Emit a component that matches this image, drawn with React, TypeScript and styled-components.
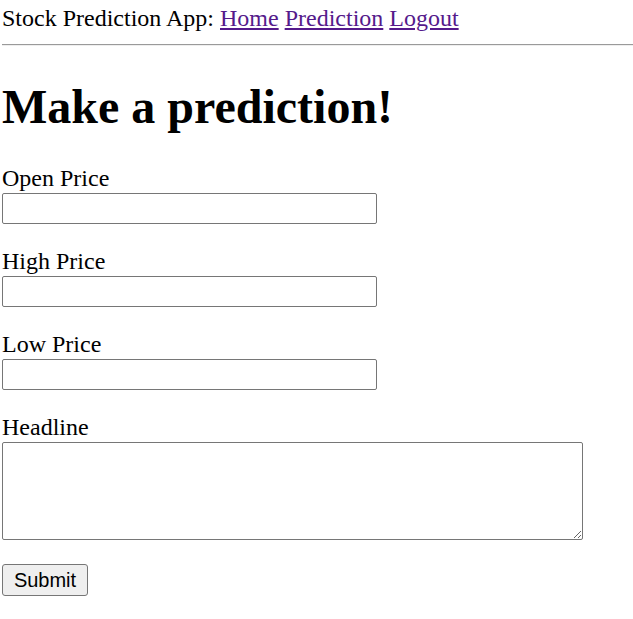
import React from "react";
import styled, { createGlobalStyle } from "styled-components";

const GlobalStyle = createGlobalStyle`
  html, body {
    margin: 0;
    padding: 0;
    background: #ffffff;
  }
  body {
    padding: 6px 0 0 2px;
    font-family: "Liberation Serif", "Times New Roman", serif;
    font-size: 24px;
    color: #000000;
  }
`;

const Nav = styled.nav`
  line-height: 24px;
  white-space: nowrap;
`;

const NavLink = styled.a`
  color: #551a8b;
  text-decoration: underline;
  cursor: pointer;
`;

const Rule = styled.hr`
  margin: 14px 0 0 0;
  border: none;
  border-top: 1px solid #9a9a9a;
  border-bottom: 1px solid #eeeeee;
  height: 0;
`;

const Title = styled.h1`
  margin: 36px 0 0 0;
  font-size: 48px;
  font-weight: bold;
  line-height: 49px;
`;

const Form = styled.form`
  display: flex;
  flex-direction: column;
  align-items: flex-start;
  margin-top: 34px;
  gap: 24px;
`;

const Field = styled.div`
  display: flex;
  flex-direction: column;
  align-items: flex-start;
`;

const Label = styled.label`
  line-height: 26px;
  margin-bottom: 2px;
`;

const TextInput = styled.input`
  box-sizing: border-box;
  width: 375px;
  height: 31px;
  margin: 0;
  padding: 2px 3px;
  border: 1px solid #767676;
  border-radius: 2px;
  font-family: "Liberation Sans", Arial, sans-serif;
  font-size: 18px;
  background: #ffffff;
`;

const TextArea = styled.textarea`
  box-sizing: border-box;
  width: 581px;
  height: 98px;
  margin: 0;
  padding: 3px;
  border: 1px solid #767676;
  border-radius: 2px;
  font-family: "Liberation Mono", monospace;
  font-size: 18px;
  background: #ffffff;
`;

const SubmitButton = styled.button`
  box-sizing: border-box;
  width: 86px;
  height: 32px;
  padding: 1px 8px;
  border: 1px solid #767676;
  border-radius: 3px;
  background: #efefef;
  font-family: "Liberation Sans", Arial, sans-serif;
  font-size: 20px;
  color: #000000;
`;

const fields = [
  { id: "open", label: "Open Price" },
  { id: "high", label: "High Price" },
  { id: "low", label: "Low Price" },
];

export default function App() {
  return (
    <>
      <GlobalStyle />
      <Nav>
        Stock Prediction App: <NavLink href="#">Home</NavLink>{" "}
        <NavLink href="#">Prediction</NavLink>{" "}
        <NavLink href="#">Logout</NavLink>
      </Nav>
      <Rule />
      <Title>Make a prediction!</Title>
      <Form onSubmit={(e) => e.preventDefault()}>
        {fields.map((f) => (
          <Field key={f.id}>
            <Label htmlFor={f.id}>{f.label}</Label>
            <TextInput id={f.id} type="text" />
          </Field>
        ))}
        <Field>
          <Label htmlFor="headline">Headline</Label>
          <TextArea id="headline" />
        </Field>
        <SubmitButton type="submit">Submit</SubmitButton>
      </Form>
    </>
  );
}
